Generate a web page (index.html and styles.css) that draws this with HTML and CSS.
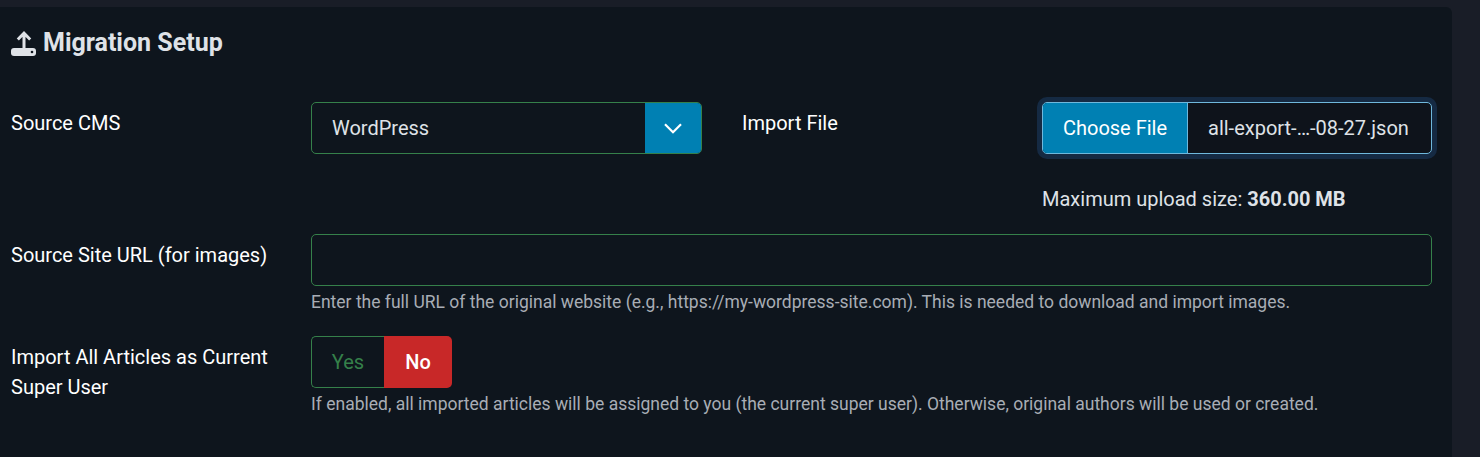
FILE: index.html
```html
<!DOCTYPE html>
<html lang="en">
<head>
<meta charset="utf-8">
<title>Migration Setup</title>
<link rel="stylesheet" href="styles.css">
</head>
<body>
<section class="card">
  <h2 class="title">
    <svg class="title-icon" viewBox="0 0 25 25" aria-hidden="true">
      <path class="icon-line" d="M13 19 V2.5 M6.8 8.5 L13 2.2 L19.2 8.5"/>
      <path class="icon-fill" d="M3 17 H22 Q25 17 25 20 V22 Q25 25 22 25 H3 Q0 25 0 22 V20 Q0 17 3 17 Z"/>
      <circle class="icon-hole" cx="21" cy="21" r="1.3"/>
    </svg>
    <span>Migration Setup</span>
  </h2>
  <div class="split">
    <div class="field">
      <label class="label">Source CMS</label>
      <div class="control">
        <div class="select">
          <span class="select-value">WordPress</span>
          <span class="select-arrow">
            <svg viewBox="0 0 18 11" class="chevron" aria-hidden="true"><path d="M1 1.2 L9 9.2 L17 1.2"/></svg>
          </span>
        </div>
      </div>
    </div>
    <div class="field">
      <label class="label">Import File</label>
      <div class="control">
        <div class="file">
          <span class="file-btn">Choose File</span>
          <span class="file-name">all-export-…-08-27.json</span>
        </div>
        <p class="upload-note">Maximum upload size: <strong>360.00 MB</strong></p>
      </div>
    </div>
  </div>
  <div class="field row-url">
    <label class="label">Source Site URL (for images)</label>
    <div class="control">
      <div class="input"></div>
      <p class="hint">Enter the full URL of the original website (e.g., https://my-wordpress-site.com). This is needed to download and import images.</p>
    </div>
  </div>
  <div class="field row-toggle">
    <label class="label">Import All Articles as Current Super User</label>
    <div class="control">
      <div class="toggle">
        <span class="toggle-yes">Yes</span>
        <span class="toggle-no">No</span>
      </div>
      <p class="hint">If enabled, all imported articles will be assigned to you (the current super user). Otherwise, original authors will be used or created.</p>
    </div>
  </div>
</section>
</body>
</html>
```
FILE: styles.css
```css
* { box-sizing: border-box; }
html, body { margin: 0; height: 100%; }
body {
  background: #191d27;
  font-family: Roboto, "Liberation Sans", sans-serif;
  font-size: 20px;
  color: #e0e3e8;
  overflow: hidden;
  padding-top: 7px;
}
.card {
  width: 1452px;
  height: 450px;
  background: #0e151d;
  border-top-right-radius: 6px;
  padding: 21px 20px 0 11px;
}
.title {
  display: flex;
  align-items: center;
  gap: 7px;
  margin: 0;
  height: 30px;
  font-size: 25px;
  line-height: 30px;
  font-weight: 700;
  color: #dfe2e7;
}
.title-icon { width: 25px; height: 25px; display: block; flex: none; }
.icon-fill { fill: #dfe2e7; }
.icon-line { fill: none; stroke: #dfe2e7; stroke-width: 3; }
.icon-hole { fill: #0e151d; }
.split {
  display: grid;
  grid-template-columns: 691px 690px;
  column-gap: 40px;
  margin-top: 44px;
}
.field { display: flex; align-items: flex-start; }
.label {
  flex: 0 0 300px;
  padding-right: 20px;
  padding-top: 6px;
  line-height: 30px;
  color: #fff;
}
.control { flex: 1; min-width: 0; }
.select {
  display: flex;
  height: 52px;
  border: 1px solid #35804a;
  border-radius: 5px;
  overflow: hidden;
}
.select-value { flex: 1; padding-left: 20px; line-height: 50px; color: #dfe2e7; }
.select-arrow {
  width: 56px;
  background: #0080b3;
  display: flex;
  align-items: center;
  justify-content: center;
}
.chevron { width: 18px; height: 11px; fill: none; stroke: #fff; stroke-width: 2.2; }
.file {
  display: flex;
  height: 52px;
  border: 1px solid #6fb8dc;
  border-radius: 5px;
  overflow: hidden;
  box-shadow: 0 0 0 5px #152a43;
  background: #0e131b;
}
.file-btn {
  width: 145px;
  background: #0080b3;
  border-right: 1px solid #6fb8dc;
  color: #fff;
  text-align: center;
  line-height: 50px;
}
.file-name { padding-left: 20px; line-height: 50px; color: #dfe2e7; }
.upload-note { margin: 30px 0 0; line-height: 30px; color: #dfe2e7; }
.upload-note strong { font-weight: 700; }
.row-url { margin-top: 20px; }
.input { height: 52px; border: 1px solid #35804a; border-radius: 5px; }
.hint { margin: 4px 0 0; font-size: 17.5px; line-height: 24px; color: #a8adb5; }
.row-toggle { margin-top: 22px; }
.toggle {
  display: inline-flex;
  height: 52px;
  vertical-align: top;
  border-radius: 5px;
}
.toggle-yes {
  width: 73px;
  border: 1px solid #35804a;
  border-right: 0;
  border-radius: 5px 0 0 5px;
  color: #35804a;
  text-align: center;
  line-height: 50px;
}
.toggle-no {
  width: 68px;
  background: #c82828;
  border-radius: 0 5px 5px 0;
  color: #fff;
  font-weight: 500;
  text-align: center;
  line-height: 52px;
}
```
